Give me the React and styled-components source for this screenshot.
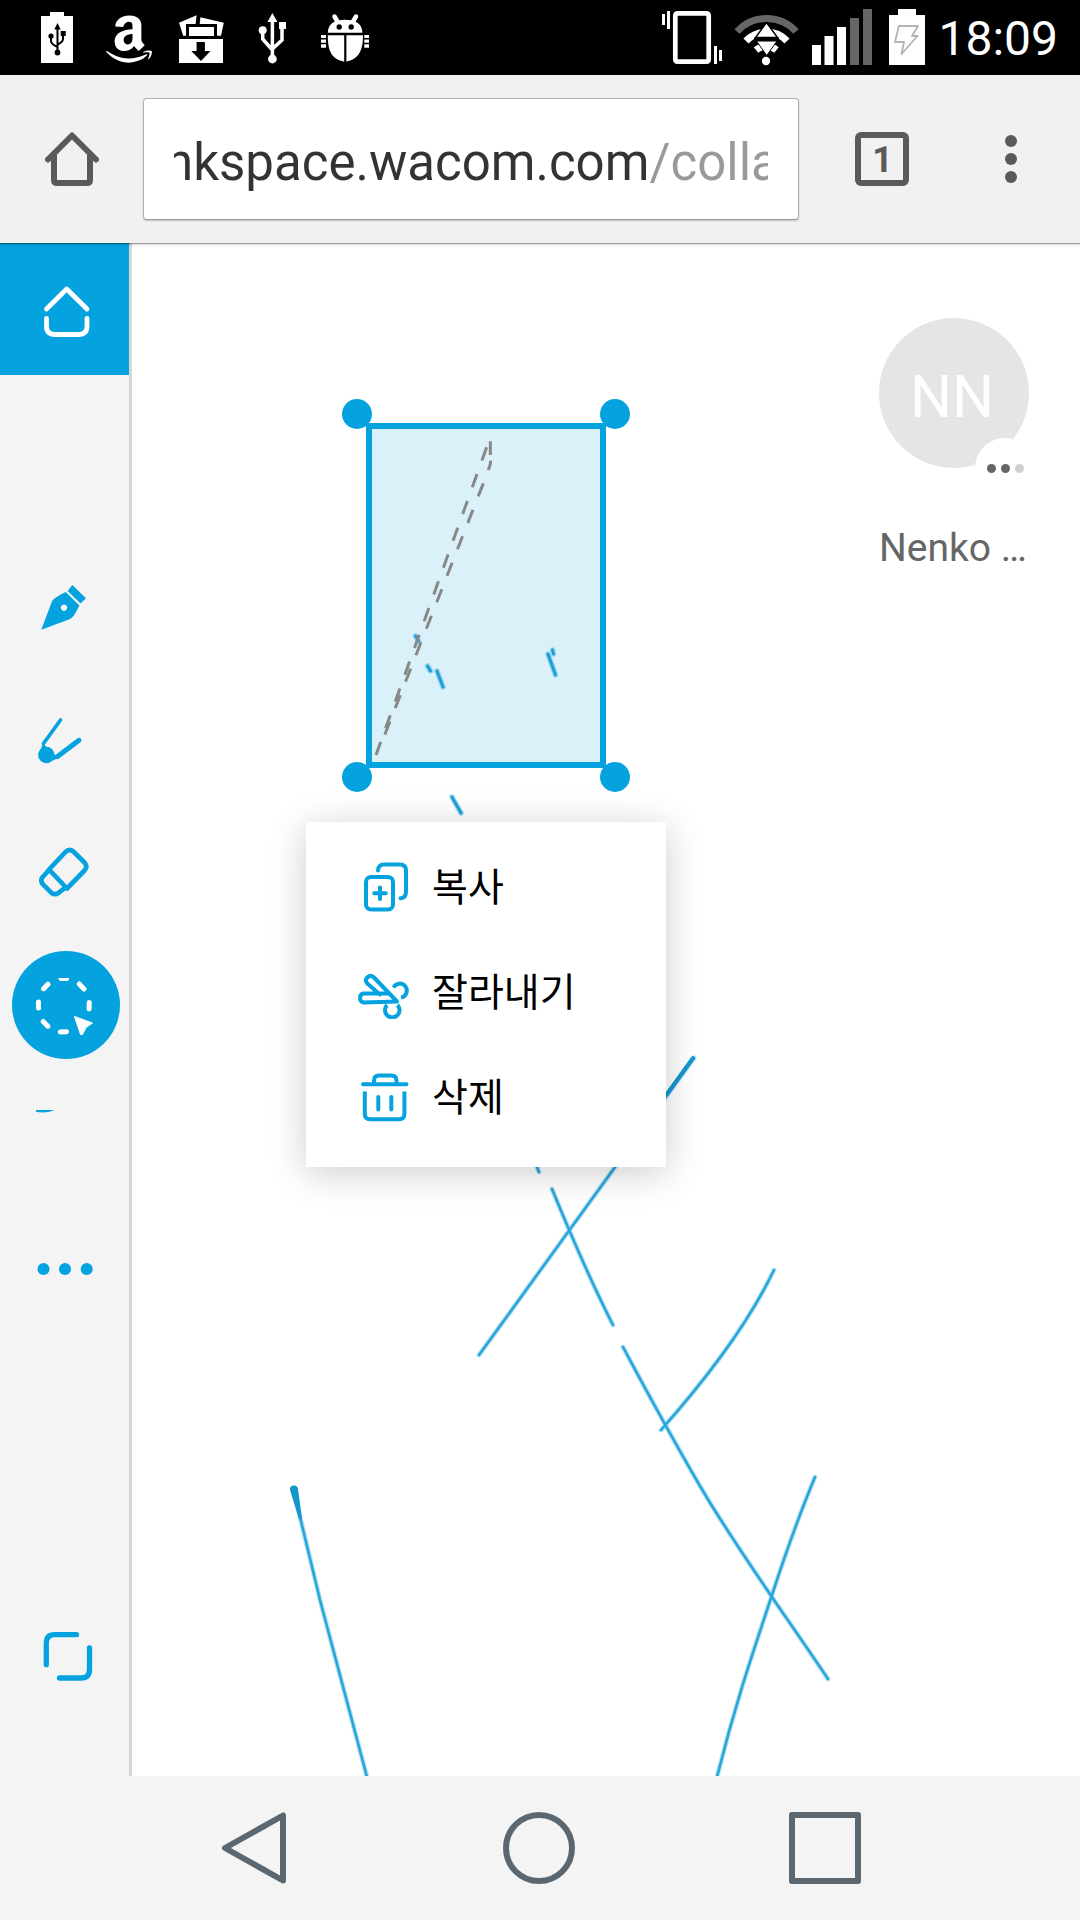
import React from "react";
import styled, { createGlobalStyle } from "styled-components";
import { FaAmazon } from "react-icons/fa";

const BLUE = "#04a3e0";
const CHROME_GREY = "#5a5a5a";
const NAV_GREY = "#5b6770";

const GlobalStyle = createGlobalStyle`
  * { box-sizing: border-box; }
  body {
    margin: 0;
    background: #fff;
    font-family: Roboto, "Noto Sans CJK KR", sans-serif;
  }
  button {
    margin: 0;
    padding: 0;
    border: 0;
    background: none;
    font: inherit;
    color: inherit;
    cursor: pointer;
  }
  svg { display: block; flex: none; }
`;

const Screen = styled.div`
  display: flex;
  flex-direction: column;
  min-height: 100vh;
`;

/* ---------- status bar ---------- */

const StatusBar = styled.header`
  display: flex;
  align-items: center;
  justify-content: space-between;
  height: 75px;
  padding: 0 22px 0 33px;
  background: #000;
  color: #fff;
`;

const StatusGroup = styled.div`
  display: flex;
  align-items: center;
  gap: ${(p) => p.$gap}px;
`;

const AmazonSlot = styled.span`
  display: flex;
  justify-content: center;
  width: 48px;
  padding-top: 2px;
`;

const Clock = styled.time`
  padding-top: 3px;
  font-size: 48px;
  line-height: 56px;
`;

const StatusIcon = ({ width = 48, children }) => (
  <svg width={width} height="57" viewBox={`0 0 ${width} 57`} fill="#fff" aria-hidden="true">
    {children}
  </svg>
);

const UsbBatteryIcon = () => (
  <StatusIcon>
    <path d="M17 3h14v4h9v47H8V7h9z" />
    <g stroke="#000" strokeWidth="2" fill="none">
      <path d="M24.5 20v23M18 27v5q0 3 6.500 6M30 26v4q0 3-5.500 5.500" />
    </g>
    <g fill="#000">
      <path d="M24.500 14l3.200 6.500h-6.400z" />
      <circle cx="24.500" cy="43.500" r="2.900" />
      <circle cx="18" cy="27" r="2.600" />
      <rect x="27.700" y="22" width="5" height="5" />
    </g>
  </StatusIcon>
);

const DownloadBoxIcon = () => (
  <StatusIcon>
    <path d="M2 13.700L19.600 6.300 18.600 15H9v11.700H6.200z" />
    <path d="M23.400 8.300l23.400 5.400L44 26.700h-4V15H22.700z" />
    <rect x="12" y="18" width="25" height="9" />
    <rect x="2" y="30" width="44" height="24" />
    <path d="M19.600 33h8.300v9h5.600L24 52l-9.700-10h5.300z" fill="#000" />
  </StatusIcon>
);

const UsbIcon = () => (
  <StatusIcon>
    <path d="M23.400 10v38M13.700 21v9l9.700 11M33 18v13l-9.600 9" fill="none" stroke="#fff" strokeWidth="3.500" />
    <path d="M23.400 4l5 9h-10z" />
    <circle cx="23.400" cy="50" r="4.400" />
    <circle cx="13.700" cy="21.300" r="4" />
    <rect x="30" y="13" width="7" height="7" />
  </StatusIcon>
);

const BugIcon = () => (
  <StatusIcon>
    <path d="M13.500 7.500l3.500 6M35 7.500l-3.500 6" stroke="#fff" strokeWidth="4.500" strokeLinecap="round" />
    <path d="M6.800 23.700C7 15 13 10.700 24 10.700s17.200 4.300 17.400 13z" />
    <circle cx="18.200" cy="18" r="2.700" fill="#000" />
    <circle cx="30.200" cy="18" r="2.700" fill="#000" />
    <path d="M6.800 26.300h16.400v26.400C11 50 6.800 43 6.800 26.300zM25.400 26.300H42C42 43 37 50 25.400 52.700z" />
    <path d="M0 26h5v3H0zM0 30.500h5v3.200H0zM0 35.300h5v3.400H0zM43.300 26h4.700v3h-4.700zM43.300 30.500h4.700v3.200h-4.700zM43.300 35.300h4.700v3.400h-4.700z" />
  </StatusIcon>
);

const VibrateIcon = () => (
  <StatusIcon width={60}>
    <rect x="13.300" y="4.400" width="33.400" height="48.200" rx="2" fill="none" stroke="#fff" strokeWidth="4.700" />
    <path d="M0 5h3v11H0zM5 2h3v18H5zM52 37h3v18h-3zM57 41h3v11h-3z" />
  </StatusIcon>
);

const WifiIcon = () => (
  <StatusIcon width={66}>
    <g fill="none" strokeWidth="7">
      <path d="M3 22.500A40 40 0 0 1 62 22.500" stroke="#666" />
      <path d="M12 32A28 28 0 0 1 53 32" stroke="#fff" />
      <path d="M22 41A16 16 0 0 1 42.500 41" stroke="#fff" />
    </g>
    <path d="M32.500 13.500L43.500 28.500h-22z" stroke="#000" strokeWidth="1.500" />
    <path d="M20 28.500h25v3.500H20z" fill="#000" />
    <path d="M22.500 32h20.500L32.700 46.500z" stroke="#000" strokeWidth="1" />
    <circle cx="32" cy="52" r="4.200" />
  </StatusIcon>
);

const SignalIcon = () => (
  <StatusIcon width={64}>
    <path d="M0 36h9v20H0zM12.500 27h9v29h-9zM25 18h9v38h-9z" />
    <path d="M38 9h9v47h-9zM51 0h9v56h-9z" fill="#666" />
  </StatusIcon>
);

const ChargingIcon = () => (
  <StatusIcon width={38}>
    <path d="M10 0h18v6h9v50H1V6h9z" />
    <path
      d="M10.800 17H30l-6 10h5.500L13.500 45l2.500-12H7z"
      fill="none"
      stroke="#b4b4b4"
      strokeWidth="1.800"
      strokeLinejoin="round"
    />
  </StatusIcon>
);

/* ---------- browser toolbar ---------- */

const BrowserBar = styled.div`
  position: relative;
  z-index: 1;
  display: flex;
  align-items: center;
  height: 168px;
  padding-right: 5px;
  background: #f1f1f1;
  box-shadow: 0 1px 1px rgba(0, 0, 0, 0.3), 0 2px 3px rgba(0, 0, 0, 0.12);
`;

const BarButton = styled.button`
  display: flex;
  align-items: center;
  justify-content: center;
  width: ${(p) => p.$width}px;
  height: 122px;
  color: ${CHROME_GREY};
`;

const AddressBox = styled.div`
  display: flex;
  flex: 1;
  min-width: 0;
  height: 122px;
  margin-right: 18px;
  padding: 0 30px;
  border: 1px solid #b2b2b2;
  border-bottom-color: #999;
  border-radius: 4px;
  background: #fff;
  box-shadow: 0 1px 2px rgba(0, 0, 0, 0.2);
`;

const AddressClip = styled.div`
  display: flex;
  flex: 1;
  min-width: 0;
  overflow: hidden;
`;

/* The host is dark and the path is light, so the glyphs are filled by a two-tone background. */
const Address = styled.input`
  flex: none;
  width: calc(100% + 60px);
  margin-left: -9px;
  padding: 6px 0 0;
  border: 0;
  outline: 0;
  font-family: Roboto, sans-serif;
  font-size: 51px;
  color: transparent;
  background: linear-gradient(90deg, #333 484px, #999 484px) text;
`;

const TabCount = styled.span`
  display: flex;
  align-items: center;
  justify-content: center;
  width: 54px;
  height: 54px;
  padding: 2px 0 0 2px;
  border: 6px solid ${CHROME_GREY};
  border-radius: 6px;
  font-size: 36px;
  line-height: 42px;
  font-weight: 700;
`;

/* ---------- ink space ---------- */

const Workspace = styled.div`
  display: flex;
  flex: 1;
`;

const Sidebar = styled.nav`
  display: flex;
  flex-direction: column;
  width: 132px;
  padding-bottom: 53px;
  background: #f4f4f4;
  border-right: 3px solid #d8d8d8;
`;

const SideButton = styled.button`
  height: 132px;
  background: ${(p) => (p.$filled ? BLUE : "transparent")};
`;

const ToolGroup = styled.div`
  display: flex;
  flex-direction: column;
  margin: 167px 0 auto;
`;

const SideIcon = ({ children }) => (
  <svg width="129" height="132" viewBox="0 0 129 132" fill={BLUE} aria-hidden="true">
    {children}
  </svg>
);

const Canvas = styled.main`
  position: relative;
  flex: 1;
  overflow: hidden;
  background: #fff;
`;

const Drawing = styled.svg`
  position: absolute;
  top: 0;
  left: 0;
`;

const Participant = styled.section`
  position: absolute;
  top: 75px;
  right: 51px;
  width: 150px;
`;

const Avatar = styled.div`
  position: relative;
  display: flex;
  align-items: center;
  justify-content: center;
  height: 150px;
  padding: 8px 4px 0 0;
  border-radius: 50%;
  background: #e5e5e5;
  color: #fff;
  font-size: 59px;
  line-height: 70px;
`;

const TypingBadge = styled.span`
  position: absolute;
  right: -6px;
  bottom: -30px;
  display: flex;
  align-items: center;
  justify-content: center;
  gap: 5px;
  width: 60px;
  height: 60px;
  border-radius: 50%;
  background: #fff;
`;

const TypingDot = styled.i`
  width: 9px;
  height: 9px;
  border-radius: 50%;
  background: ${(p) => (p.$faded ? "#d0d0d0" : "#666")};
`;

const ParticipantName = styled.p`
  margin: 57px 0 0;
  color: #666;
  font-size: 39px;
  line-height: 46px;
  white-space: nowrap;
`;

const ContextMenu = styled.div`
  position: absolute;
  top: 579px;
  left: 174px;
  display: flex;
  flex-direction: column;
  width: 360px;
  padding: 13px 0 17px;
  background: #fff;
  box-shadow: 0 6px 36px rgba(0, 0, 0, 0.2);
`;

const MenuItem = styled.button`
  display: flex;
  align-items: center;
  gap: 22px;
  height: 105px;
  padding-left: 52px;
  color: #000;
  font-family: "Noto Sans CJK KR", sans-serif;
  font-size: 39px;
  font-weight: 400;
  line-height: 56px;
`;

const MenuLabel = styled.span`
  padding-bottom: 8px;
`;

const MenuIcon = ({ children }) => (
  <svg
    width="52"
    height="53"
    viewBox="0 0 52 53"
    fill="none"
    stroke={BLUE}
    strokeWidth="4"
    strokeLinecap="round"
    strokeLinejoin="round"
    aria-hidden="true"
  >
    {children}
  </svg>
);

/* ---------- system navigation ---------- */

const SystemNav = styled.nav`
  display: flex;
  height: 144px;
  padding: 0 112px 0 110px;
  background: #f4f4f4;
`;

const NavButton = styled.button`
  display: flex;
  flex: 1;
  align-items: center;
  justify-content: center;
`;

const NavIcon = ({ children }) => (
  <svg
    width="72"
    height="72"
    viewBox="0 0 72 72"
    fill="none"
    stroke={NAV_GREY}
    strokeWidth="6"
    strokeLinejoin="round"
    aria-hidden="true"
  >
    {children}
  </svg>
);

const handles = [
  [357, 414],
  [615, 414],
  [357, 777],
  [615, 777],
];

const strokes = [
  "M694 1058L479 1355",
  "M530 1150l9 22M552 1189C568 1228 592 1284 613 1325",
  "M623 1347C645 1388 664 1424 700 1486S790 1622 828 1679",
  "M774 1270C752 1316 716 1368 661 1430",
  "M815 1477C797 1520 785 1555 771 1598C752 1655 735 1705 717 1777",
  "M294 1492L320 1600L367 1777",
];

const specks =
  "M415.500 636l3 5M427.500 666l3 5M437 671l6 16M548 654l7.500 21M552.500 650l1 4M452 797l9 16";

const InkDrawing = () => (
  <Drawing width="948" height="1533" viewBox="132 243 948 1533" fill="none" aria-hidden="true">
    <rect x="369" y="426" width="234" height="339" fill="#dbf1fa" />
    <g strokeLinecap="round">
      <path d={strokes.join("")} stroke="#8fd0ec" strokeOpacity="0.6" strokeWidth="5" />
      <path d={strokes.join("")} stroke="#27a6da" strokeWidth="2.600" />
      <path d={specks} stroke="#6cc3e8" strokeOpacity="0.6" strokeWidth="5.500" />
      <path d={specks} stroke="#1f9fd6" strokeWidth="3" />
    </g>
    <path d="M290 1490a4 4 0 0 1 8-1l4 30h-3z" fill="#1497cf" />
    <path d="M693 1058L667 1094" stroke="#1497cf" strokeWidth="4" strokeLinecap="round" />
    <g transform="translate(320 380) scale(.33333)" stroke="#888" strokeWidth="9">
      <path d="M511 184v41M512 242l-1 10-6 18" />
      <path d="M490 310L194 1065" strokeDasharray="42 43.300" />
      <path d="M500 202L168 1125" strokeDasharray="42 43.400" />
    </g>
    <rect x="369" y="426" width="234" height="339" stroke={BLUE} strokeWidth="6" />
    {handles.map(([x, y]) => (
      <circle key={`${x}-${y}`} cx={x} cy={y} r="15" fill={BLUE} />
    ))}
  </Drawing>
);

export default function App() {
  return (
    <>
      <GlobalStyle />
      <Screen>
        <StatusBar>
          <StatusGroup $gap={24}>
            <UsbBatteryIcon />
            <AmazonSlot>
              <FaAmazon size={54} aria-hidden="true" />
            </AmazonSlot>
            <DownloadBoxIcon />
            <UsbIcon />
            <BugIcon />
          </StatusGroup>
          <StatusGroup $gap={12}>
            <VibrateIcon />
            <WifiIcon />
            <SignalIcon />
            <ChargingIcon />
            <Clock>18:09</Clock>
          </StatusGroup>
        </StatusBar>

        <BrowserBar>
          <BarButton $width={143} aria-label="Home">
            <svg
              width="54"
              height="54"
              viewBox="0 0 54 54"
              fill="none"
              stroke="currentColor"
              strokeWidth="6"
              strokeLinecap="round"
              strokeLinejoin="round"
              aria-hidden="true"
            >
              <path d="M3 27.500L27 3.500l24 24M9 23v25q0 3 3 3h30q3 0 3-3V23" />
            </svg>
          </BarButton>
          <AddressBox>
            <AddressClip>
              <Address type="text" aria-label="Address" defaultValue="nkspace.wacom.com/colla" />
            </AddressClip>
          </AddressBox>
          <BarButton $width={129} aria-label="Open tabs">
            <TabCount>1</TabCount>
          </BarButton>
          <BarButton $width={129} aria-label="Menu">
            <svg width="12" height="54" viewBox="0 0 12 54" fill="currentColor" aria-hidden="true">
              <circle cx="6" cy="9" r="6" />
              <circle cx="6" cy="27" r="6" />
              <circle cx="6" cy="45" r="6" />
            </svg>
          </BarButton>
        </BrowserBar>

        <Workspace>
          <Sidebar>
            <SideButton $filled aria-label="Ink space home">
              <SideIcon>
                <path
                  d="M46.500 66L66.700 46L87 66M46.500 75.500V83q0 8.500 8.500 8.500h23.500q8.500 0 8.500-8.500v-7.500"
                  fill="none"
                  stroke="#fff"
                  strokeWidth="4.800"
                  strokeLinecap="round"
                  strokeLinejoin="round"
                />
              </SideIcon>
            </SideButton>
            <ToolGroup>
              <SideButton aria-label="Pen">
                <SideIcon>
                  <path
                    fillRule="evenodd"
                    d="M41.300 87.700L51.500 60.500Q52.300 58 54.500 56.500Q59 53 65.700 50L79.300 63.500Q76.500 70 73.500 74Q72 76 69.500 77.200ZM64 62.500a3.200 3.200 0 1 0 .01 0z"
                  />
                  <path d="M72.300 43L86 56.300l-5.500 5.300L67.600 49z" />
                </SideIcon>
              </SideButton>
              <SideButton aria-label="Marker">
                <SideIcon>
                  <circle cx="46.300" cy="81" r="8.200" />
                  <path d="M43 69.500L58 84 48 89l-9-10z" />
                  <g fill="none" stroke={BLUE} strokeLinecap="round">
                    <path d="M60.500 46L43.500 69.500" strokeWidth="3.600" />
                    <path d="M79 66.300L57.500 82.500" strokeWidth="5" />
                  </g>
                </SideIcon>
              </SideButton>
              <SideButton aria-label="Eraser">
                <SideIcon>
                  <g fill="none" stroke={BLUE} strokeWidth="4.700" strokeLinejoin="round">
                    <path d="M49 63.500L65.500 46q4.200-4 8.400 0L84.500 56.500q3.500 4 0 8L67 82.500z" />
                    <path d="M49 64l-6.500 7.200q-2.500 3.300 0 6.600l9 9q3.500 2.700 7 0l6.500-5" />
                  </g>
                </SideIcon>
              </SideButton>
              <SideButton aria-label="Selection" aria-pressed="true">
                <SideIcon>
                  <circle cx="66" cy="67" r="54" />
                  <path d="M58.300 40h11q-.5 3-2.500 3h-6q-2 0-2.500-3z" fill="#fff" />
                  <path
                    d="M79.300 46l4.700 5M89.300 64.500l-.2 6.500M60.200 94l6.300-.3M43.200 83.500l4.600 4.700M38.500 64v6M43.600 50.700l4.400-4.500"
                    stroke="#fff"
                    strokeWidth="5"
                    strokeLinecap="round"
                  />
                  <path
                    d="M74.500 78.500L92.500 85 86 89.500 82.500 96.500H80.500z"
                    fill="#fff"
                    stroke="#fff"
                    strokeLinejoin="round"
                  />
                </SideIcon>
              </SideButton>
              <SideButton aria-label="Brush stroke">
                <SideIcon>
                  <path d="M36 40h18.700Q45 44 36 41.800z" />
                </SideIcon>
              </SideButton>
              <SideButton aria-label="More tools">
                <SideIcon>
                  <circle cx="43.500" cy="67" r="6" />
                  <circle cx="65" cy="67" r="6" />
                  <circle cx="86.700" cy="67" r="6" />
                </SideIcon>
              </SideButton>
            </ToolGroup>
            <SideButton aria-label="Full screen">
              <SideIcon>
                <path
                  d="M46.300 73.700V52q0-8.300 8.300-8.300h21.900M89.500 57v21.500q0 8.500-8.300 8.500H59.500"
                  fill="none"
                  stroke={BLUE}
                  strokeWidth="5.300"
                  strokeLinecap="round"
                />
              </SideIcon>
            </SideButton>
          </Sidebar>

          <Canvas>
            <InkDrawing />
            <Participant>
              <Avatar>
                NN
                <TypingBadge>
                  <TypingDot />
                  <TypingDot />
                  <TypingDot $faded />
                </TypingBadge>
              </Avatar>
              <ParticipantName>Nenko …</ParticipantName>
            </Participant>
            <ContextMenu role="menu">
              <MenuItem role="menuitem">
                <MenuIcon>
                  <rect x="8" y="16" width="27" height="32.500" rx="5" />
                  <path d="M22 26.500v11.500M16.200 32.300h11.600M20 9.500q.3-6 6-6h16q6 0 6 6v21.500q0 6-5.500 6.200" />
                </MenuIcon>
                <MenuLabel>복사</MenuLabel>
              </MenuItem>
              <MenuItem role="menuitem">
                <MenuIcon>
                  <path d="M39 35.500L15.500 11q-3-2.500-6 .3t-.5 6L22 28.500M39 35.500L5.500 36.500q-3.500-.8-3.500-4.500t3.500-4.500H30" />
                  <path d="M35.500 21.500a7 7 0 1 1 7.500 10M29 39a7.300 7.300 0 1 0 10.500 0" strokeLinecap="butt" />
                </MenuIcon>
                <MenuLabel>잘라내기</MenuLabel>
              </MenuItem>
              <MenuItem role="menuitem">
                <MenuIcon>
                  <path d="M5 13.300h43.500M16 12V9.500q0-5 5-5h12.500q5 0 5 5V12M20.300 26v12.500M33.300 26v12.500" />
                  <path d="M6.800 20.500V43q0 5.300 5.300 5.300h29q5.300 0 5.300-5.300V20.500" strokeLinecap="butt" />
                </MenuIcon>
                <MenuLabel>삭제</MenuLabel>
              </MenuItem>
            </ContextMenu>
          </Canvas>
        </Workspace>

        <SystemNav>
          <NavButton aria-label="Back">
            <NavIcon>
              <path d="M66 3.500v65L8 36z" />
            </NavIcon>
          </NavButton>
          <NavButton aria-label="Home screen">
            <NavIcon>
              <circle cx="36" cy="36" r="33" />
            </NavIcon>
          </NavButton>
          <NavButton aria-label="Recent apps">
            <NavIcon>
              <rect x="3" y="3" width="66" height="66" />
            </NavIcon>
          </NavButton>
        </SystemNav>
      </Screen>
    </>
  );
}
